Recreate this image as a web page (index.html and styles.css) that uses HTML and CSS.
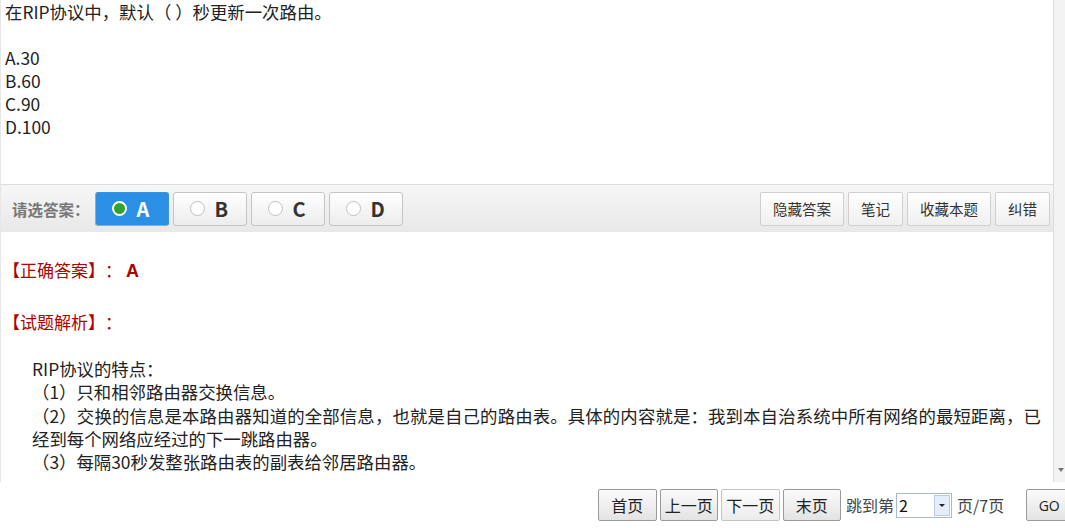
FILE: index.html
```html
<!DOCTYPE html>
<html lang="zh-CN">
<head>
    <meta charset="UTF-8">
    <title>试题</title>
    <link rel="stylesheet" href="styles.css">
</head>
<body>
    <div class="frame">
        <div class="content">
            <div class="question">
                <p>在RIP协议中，默认（ ）秒更新一次路由。</p>
                <p class="blank"></p>
                <p>A.30</p>
                <p>B.60</p>
                <p>C.90</p>
                <p>D.100</p>
            </div>
            <div class="toolbar">
                <span class="label">请选答案：</span>
                <button class="choice selected"><span class="radio"></span>A</button>
                <button class="choice"><span class="radio"></span>B</button>
                <button class="choice"><span class="radio"></span>C</button>
                <button class="choice"><span class="radio"></span>D</button>
                <div class="tools">
                    <button class="tool">隐藏答案</button>
                    <button class="tool">笔记</button>
                    <button class="tool">收藏本题</button>
                    <button class="tool">纠错</button>
                </div>
            </div>
            <div class="answer">
                <p class="key">【正确答案】：<b>A</b></p>
                <p class="key last">【试题解析】：</p>
                <div class="analysis">
                    <p>RIP协议的特点：</p>
                    <p>（1）只和相邻路由器交换信息。</p>
                    <p>（2）交换的信息是本路由器知道的全部信息，也就是自己的路由表。具体的内容就是：我到本自治系统中所有网络的最短距离，已经到每个网络应经过的下一跳路由器。</p>
                    <p>（3）每隔30秒发整张路由表的副表给邻居路由器。</p>
                </div>
            </div>
        </div>
        <div class="scrollbar"><span class="arrow"></span></div>
    </div>
    <div class="pager">
        <button class="page-btn">首页</button>
        <button class="page-btn">上一页</button>
        <button class="page-btn light">下一页</button>
        <button class="page-btn">末页</button>
        <span class="jump">跳到第</span>
        <span class="select"><span class="value">2</span><span class="drop"></span></span>
        <span class="total">页/7页</span>
        <button class="page-btn go">GO</button>
    </div>
</body>
</html>
```

FILE: styles.css
```css
body {
    margin: 0;
    font-family: "Noto Sans CJK SC", "Open Sans", sans-serif;
    color: #222;
    background: #fff;
    overflow: hidden;
    text-spacing-trim: space-all;
}

p {
    margin: 0;
}

button {
    font-family: inherit;
    cursor: pointer;
    text-spacing-trim: space-all;
}

.frame {
    display: flex;
    height: 482px;
}

.content {
    width: 1052px;
    border-left: 1px solid #e6e6e6;
    border-right: 1px solid #dcdcdc;
    overflow: hidden;
}

.scrollbar {
    flex: 1;
    background: #f3f3f3;
    position: relative;
}

.scrollbar .arrow {
    position: absolute;
    right: 1px;
    bottom: 10px;
    border-left: 3px solid transparent;
    border-right: 3px solid transparent;
    border-top: 4px solid #777;
}

.question {
    padding: 0 4px;
    font-size: 17.4px;
    line-height: 23px;
    height: 184px;
}

.question .blank {
    height: 23px;
}

.toolbar {
    display: flex;
    align-items: center;
    height: 47px;
    border-top: 1px solid #dddddd;
    background: linear-gradient(#f6f6f6, #e8e8e8);
    padding: 0 3px 0 11px;
}

.label {
    font-size: 15.5px;
    font-weight: bold;
    color: #777;
    margin-right: 5px;
}

.choice {
    display: flex;
    align-items: center;
    gap: 10px;
    width: 74px;
    height: 34px;
    margin-right: 4px;
    padding: 0 0 0 16px;
    font-size: 20px;
    font-weight: bold;
    color: #333;
    border: 1px solid #c4c4c4;
    border-radius: 3px;
    background: linear-gradient(#ffffff, #ececec);
}

.choice .radio {
    width: 15px;
    height: 15px;
    border-radius: 50%;
    border: 1px solid #c0c0c0;
    background: #fff;
    box-sizing: border-box;
}

.choice.selected {
    color: #fff;
    background: #2b8fe6;
    border-color: #3a91dd #3a91dd #c9a25b #c9a25b;
}

.choice.selected .radio {
    border: 2px solid #fff;
    background: #35a12e;
}

.tools {
    margin-left: auto;
    display: flex;
    gap: 4px;
}

.tool {
    height: 34px;
    padding: 0 12px;
    font-size: 14.5px;
    color: #333;
    border: 1px solid #cfcfcf;
    border-radius: 2px;
    background: linear-gradient(#ffffff, #efefef);
}

.answer {
    padding: 26px 12px 0 2px;
}

.key {
    font-size: 17px;
    line-height: 24px;
    color: #b00000;
    margin-bottom: 27px;
}

.key.last {
    margin-bottom: 23px;
}

.key b {
    font-family: "Liberation Sans", sans-serif;
    font-size: 18px;
    margin-left: 4px;
}

.analysis {
    padding-left: 29px;
    font-size: 17.4px;
    line-height: 23.3px;
    text-align: justify;
}

.pager {
    display: flex;
    align-items: center;
    height: 46px;
    padding-left: 598px;
    font-size: 16px;
    color: #444;
    white-space: nowrap;
}

.pager > * {
    flex-shrink: 0;
}

.page-btn {
    height: 32px;
    padding: 0;
    width: 58.5px;
    margin-right: 3px;
    font-size: 16px;
    color: #222;
    border: 1px solid #9a9a9a;
    border-radius: 2px;
    background: linear-gradient(#fbfbfb, #e3e3e3);
}

.page-btn.light {
    border-color: #c4c4c4;
    background: linear-gradient(#fdfdfd, #ececec);
}

.page-btn.go {
    margin-left: 22px;
    width: 46px;
    font-family: "Open Sans", sans-serif;
    font-size: 14px;
}

.jump {
    margin-left: 2px;
}

.select {
    display: flex;
    align-items: center;
    width: 56px;
    height: 25px;
    box-sizing: border-box;
    border: 1px solid #a9b8cc;
    background: #fff;
    margin: 0 5px 0 2px;
}

.select .value {
    flex: 1;
    padding-left: 2px;
    font-size: 16px;
    color: #111;
}

.select .drop {
    position: relative;
    width: 16px;
    height: 21px;
    margin-right: 1px;
    border: 1px solid #b8cbe2;
    box-sizing: border-box;
    background: #e3eefa;
}

.select .drop::after {
    content: "";
    position: absolute;
    left: 4px;
    top: 8px;
    border-left: 3px solid transparent;
    border-right: 3px solid transparent;
    border-top: 3px solid #222;
}
```
